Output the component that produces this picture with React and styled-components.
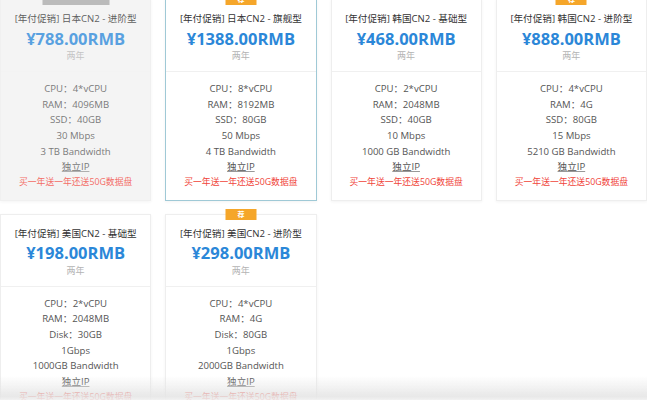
import React from "react";
import styled, { createGlobalStyle, css } from "styled-components";

const plans = [
  {
    name: "日本CN2 - 进阶型",
    price: "¥788.00RMB",
    specs: ["CPU：4*vCPU", "RAM：4096MB", "SSD：40GB", "30 Mbps", "3 TB Bandwidth"],
    badge: "soldout",
    disabled: true,
  },
  {
    name: "日本CN2 - 旗舰型",
    price: "¥1388.00RMB",
    specs: ["CPU：8*vCPU", "RAM：8192MB", "SSD：80GB", "50 Mbps", "4 TB Bandwidth"],
    badge: "hot",
    active: true,
  },
  {
    name: "韩国CN2 - 基础型",
    price: "¥468.00RMB",
    specs: ["CPU：2*vCPU", "RAM：2048MB", "SSD：40GB", "10 Mbps", "1000 GB Bandwidth"],
  },
  {
    name: "韩国CN2 - 进阶型",
    price: "¥888.00RMB",
    specs: ["CPU：4*vCPU", "RAM：4G", "SSD：80GB", "15 Mbps", "5210 GB Bandwidth"],
    badge: "hot",
  },
  {
    name: "美国CN2 - 基础型",
    price: "¥198.00RMB",
    specs: ["CPU：2*vCPU", "RAM：2048MB", "Disk：30GB", "1Gbps", "1000GB Bandwidth"],
  },
  {
    name: "美国CN2 - 进阶型",
    price: "¥298.00RMB",
    specs: ["CPU：4*vCPU", "RAM：4G", "Disk：80GB", "1Gbps", "2000GB Bandwidth"],
    badge: "hot",
  },
];

function App() {
  return (
    <>
      <GlobalStyle />
      <Grid>
        {plans.map((p) => (
          <Card key={p.name} $active={p.active} $disabled={p.disabled}>
            {p.badge && (
              <Badge $kind={p.badge}>{p.badge === "hot" ? "荐" : ""}</Badge>
            )}
            <Head>
              <Title>[年付促销] {p.name}</Title>
              <Price>{p.price}</Price>
              <Period>两年</Period>
            </Head>
            <Specs>
              {p.specs.map((s) => (
                <Spec key={s}>{s}</Spec>
              ))}
              <Spec>
                <Ip>独立IP</Ip>
              </Spec>
              <Promo>买一年送一年还送50G数据盘</Promo>
            </Specs>
          </Card>
        ))}
      </Grid>
      <BottomFade />
    </>
  );
}

const GlobalStyle = createGlobalStyle`
  html, body {
    margin: 0;
    background: #ffffff;
    overflow: hidden;
  }
  body {
    font-family: "Open Sans", "Noto Sans CJK SC", sans-serif;
  }
`;

const Grid = styled.div`
  display: grid;
  grid-template-columns: repeat(4, 1fr);
  column-gap: 14px;
  row-gap: 13px;
  width: 647px;
  margin-top: -1px;
`;

const Card = styled.div`
  position: relative;
  background: #ffffff;
  border: 1px solid #eeeeee;
  box-shadow: 0 1px 3px rgba(0, 0, 0, 0.05);
  text-align: center;
  ${(p) =>
    p.$active &&
    css`
      border-color: #9fc9d6;
    `}
  ${(p) =>
    p.$disabled &&
    css`
      background: #f2f2f2;
      border-color: #ececec;
      opacity: 0.78;
    `}
`;

const Badge = styled.span`
  position: absolute;
  top: -6px;
  left: 50%;
  transform: translateX(-50%);
  width: ${(p) => (p.$kind === "hot" ? "31px" : "67px")};
  height: 11px;
  line-height: 11px;
  font-size: 7px;
  font-weight: 700;
  color: #fff;
  background: ${(p) => (p.$kind === "hot" ? "#f5a62a" : "#a8a8a8")};
`;

const Head = styled.div`
  padding: 11px 0 9px;
  border-bottom: 1px solid #f0f0f0;
`;

const Title = styled.div`
  font-size: 9.6px;
  line-height: 16px;
  color: #333;
`;

const Price = styled.div`
  margin-top: 1.5px;
  font-size: 16.5px;
  line-height: 20px;
  font-weight: 700;
  color: #2b87d8;
`;

const Period = styled.div`
  margin-top: 1.5px;
  font-size: 9px;
  line-height: 12px;
  color: #b4b4b4;
`;

const Specs = styled.div`
  padding: 9px 0 9px;
`;

const Spec = styled.div`
  font-size: 9.6px;
  line-height: 15.67px;
  color: #555;
`;

const Ip = styled.span`
  text-decoration: underline;
  text-decoration-color: #999;
  text-underline-offset: 1px;
`;

const Promo = styled.div`
  font-size: 8.8px;
  line-height: 15.67px;
  color: #f0443a;
`;

const BottomFade = styled.div`
  position: fixed;
  left: 0;
  right: 0;
  bottom: 0;
  height: 24px;
  background: linear-gradient(
    to bottom,
    rgba(255, 255, 255, 0),
    rgba(228, 228, 228, 0.85) 85%,
    rgba(240, 240, 240, 0.9)
  );
  pointer-events: none;
`;

export default App;
